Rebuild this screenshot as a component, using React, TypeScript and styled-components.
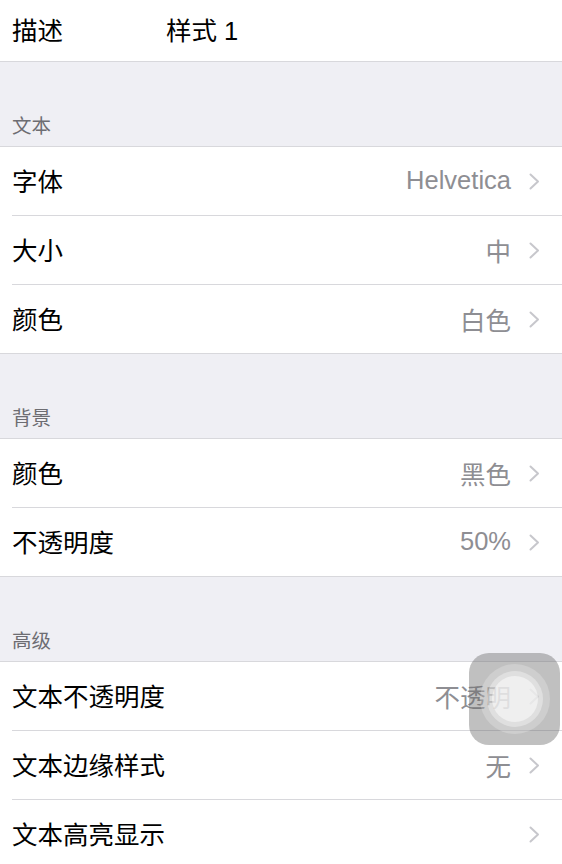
import React from 'react';
import styled, { createGlobalStyle } from 'styled-components';

const GlobalStyle = createGlobalStyle`
  html, body {
    margin: 0;
    padding: 0;
    background: #ffffff;
    font-family: 'Liberation Sans', 'Noto Sans CJK SC', sans-serif;
    -webkit-font-smoothing: antialiased;
  }
  #root {
    height: 864px;
    overflow: hidden;
    position: relative;
  }
`;

const Page = styled.div`
  width: 562px;
  background: #efeff4;
  min-height: 864px;
`;

const TopRow = styled.div`
  background: #fff;
  display: flex;
  align-items: center;
  padding: 0 0 5px 12px;
  height: 56px;
  font-size: 25.5px;
  color: #000;
  border-bottom: 1px solid #d8d8dc;
`;

const TopLabel = styled.span`
  width: 154px;
`;

const SectionHeader = styled.div`
  height: 84px;
  display: flex;
  align-items: flex-end;
  padding: 0 0 10px 12px;
  box-sizing: border-box;
  font-size: 19.5px;
  line-height: 1;
  color: #6d6d72;
`;

const Group = styled.div`
  background: #fff;
  border-top: 1px solid #d8d8dc;
  border-bottom: 1px solid #d8d8dc;
`;

const Row = styled.div<{ $last?: boolean }>`
  display: flex;
  align-items: center;
  margin-left: 12px;
  padding-right: 22px;
  box-sizing: border-box;
  border-bottom: ${({ $last }) => ($last ? 'none' : '1px solid #d8d8dc')};
  height: ${({ $last }) => ($last ? '68px' : '69px')};
`;

const Label = styled.span`
  flex: 1;
  font-size: 25.5px;
  color: #000;
  margin-bottom: 3px;
`;

const Value = styled.span`
  font-size: 25.5px;
  color: #8e8e93;
  margin: 0 18px 2px 0;
`;

const Chevron = () => (
  <svg width="11" height="17" viewBox="0 0 11 17">
    <path d="M1.5 1.5 L9 8.5 L1.5 15.5" fill="none" stroke="#c7c7cc" strokeWidth="2" strokeLinecap="round" strokeLinejoin="round" />
  </svg>
);

const Touch = styled.div`
  position: absolute;
  left: 469px;
  top: 653px;
  width: 91px;
  height: 92px;
  border-radius: 20px;
  background: rgba(105, 105, 105, 0.42);
  display: flex;
  align-items: center;
  justify-content: center;
`;

const Ring = styled.div<{ $size: number; $bg: string }>`
  width: ${({ $size }) => $size}px;
  height: ${({ $size }) => $size}px;
  border-radius: 50%;
  background: ${({ $bg }) => $bg};
  display: flex;
  align-items: center;
  justify-content: center;
`;

type Item = { label: string; value: string };

const sections: { title: string; items: Item[] }[] = [
  {
    title: '文本',
    items: [
      { label: '字体', value: 'Helvetica' },
      { label: '大小', value: '中' },
      { label: '颜色', value: '白色' },
    ],
  },
  {
    title: '背景',
    items: [
      { label: '颜色', value: '黑色' },
      { label: '不透明度', value: '50%' },
    ],
  },
  {
    title: '高级',
    items: [
      { label: '文本不透明度', value: '不透明' },
      { label: '文本边缘样式', value: '无' },
      { label: '文本高亮显示', value: '' },
    ],
  },
];

const App: React.FC = () => {
  return (
    <>
      <GlobalStyle />
      <Page>
        <TopRow>
          <TopLabel>描述</TopLabel>
          <span>样式 1</span>
        </TopRow>
        {sections.map((s) => (
          <React.Fragment key={s.title}>
            <SectionHeader>{s.title}</SectionHeader>
            <Group>
              {s.items.map((it, i) => (
                <Row key={it.label} $last={i === s.items.length - 1}>
                  <Label>{it.label}</Label>
                  {it.value && <Value>{it.value}</Value>}
                  <Chevron />
                </Row>
              ))}
            </Group>
          </React.Fragment>
        ))}
      </Page>
      <Touch>
        <Ring $size={70} $bg="rgba(255,255,255,0.22)">
          <Ring $size={56} $bg="rgba(255,255,255,0.35)">
            <Ring $size={46} $bg="rgba(255,255,255,0.5)" />
          </Ring>
        </Ring>
      </Touch>
    </>
  );
};

export default App;
